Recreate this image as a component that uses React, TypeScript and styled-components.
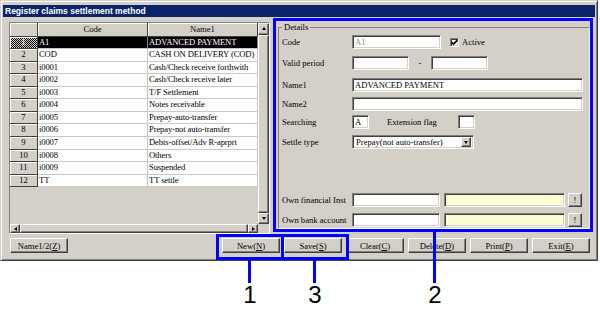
import styled, { createGlobalStyle } from "styled-components";

const GlobalStyle = createGlobalStyle`
  * { box-sizing: border-box; }
  body {
    margin: 0;
    background: #fff;
  }
`;

const serif = `"Liberation Serif", "Times New Roman", serif`;
const face = "#d4d0c8";

const raised = `
  background: ${face};
  border: 1px solid;
  border-color: #fff #404040 #404040 #fff;
  box-shadow: inset -1px -1px #808080;
`;

const sunken = `
  border: 1px solid;
  border-color: #808080 #fff #fff #808080;
  box-shadow: inset 1px 1px #404040, inset -1px -1px ${face};
`;

const Page = styled.div`
  position: relative;
  width: 600px;
  height: 312px;
  overflow: hidden;
  font-family: ${serif};
  font-size: 8.6px;
  color: #000;
`;

const Window = styled.div`
  width: 598px;
  height: 261px;
  padding: 4px 2px 0 2px;
  background: ${face};
  border: 1px solid;
  border-color: ${face} #404040 #404040 ${face};
  box-shadow: inset 1px 1px #fff, inset -1px -1px #808080;
`;

const TitleBar = styled.div`
  height: 12px;
  padding-left: 2px;
  background: #0a246a;
  color: #fff;
  font-family: "Liberation Sans", Arial, sans-serif;
  font-weight: 700;
  font-size: 8.5px;
  line-height: 12px;
  white-space: nowrap;
`;

const Main = styled.div`
  display: flex;
  align-items: flex-start;
  padding: 5px 0 0 6px;
`;

const GridFrame = styled.div`
  width: 261px;
  height: 212px;
  border: 1px solid;
  border-color: #808080 #fff #fff #808080;
  display: grid;
  grid-template-columns: 1fr 11px;
  grid-template-rows: 1fr 9px;
`;

const TableArea = styled.div`
  background: ${face};
  overflow: hidden;
`;

const Table = styled.div`
  display: grid;
  grid-template-columns: 28px 110px 110px;
  grid-template-rows: 13.6px;
  grid-auto-rows: 12.55px;
`;

const HeadCell = styled.div`
  background: ${face};
  border-right: 1px solid #404040;
  border-bottom: 1px solid #404040;
  box-shadow: inset 1px 1px #fff;
  text-align: center;
  line-height: 12.6px;
  white-space: nowrap;
  overflow: hidden;
`;

const RowHead = styled(HeadCell)<{ $active?: boolean }>`
  line-height: 11.55px;
  ${(p) =>
    p.$active &&
    `
    background: repeating-conic-gradient(#000 0 25%, ${face} 0 50%) 0 0 / 2px 2px;
    color: #fff;
  `}
`;

const DataCell = styled.div<{ $selected?: boolean }>`
  background: ${(p) => (p.$selected ? "#000" : "#fff")};
  color: ${(p) => (p.$selected ? "#fff" : "#000")};
  border-right: 1px solid ${(p) => (p.$selected ? "#808080" : "#c8c8c8")};
  border-bottom: 1px solid #c8c8c8;
  padding-left: 1px;
  line-height: 11.55px;
  letter-spacing: -0.12px;
  white-space: nowrap;
  overflow: hidden;
`;

const VScroll = styled.div`
  display: flex;
  flex-direction: column;
  background: #ebe9e4;
`;

const HScroll = styled.div`
  display: flex;
  background: #ebe9e4;
`;

const ScrollBtn = styled.div<{ $w: number; $h: number }>`
  ${raised}
  width: ${(p) => p.$w}px;
  height: ${(p) => p.$h}px;
  flex-shrink: 0;
  display: flex;
  align-items: center;
  justify-content: center;
`;

const Thumb = styled.div`
  ${raised}
  flex: 1;
`;

const Corner = styled.div`
  background: ${face};
`;

type Dir = "up" | "down" | "left" | "right";

const Arrow = styled.span<{ $dir: Dir }>`
  width: 0;
  height: 0;
  border: 2.5px solid transparent;
  ${(p) =>
    p.$dir === "up"
      ? "border-bottom: 3px solid #000; border-top-width: 0; margin-top: -1px;"
      : p.$dir === "down"
      ? "border-top: 3px solid #000; border-bottom-width: 0;"
      : p.$dir === "left"
      ? "border-right: 3px solid #000; border-left-width: 0;"
      : "border-left: 3px solid #000; border-right-width: 0;"}
`;

const GroupBox = styled.fieldset`
  margin: 0 0 0 8px;
  padding: 0 5px 0 3px;
  width: 312px;
  height: 207px;
  min-width: 0;
  border: 1px solid #808080;
  border-right-color: #fff;
  border-bottom-color: #fff;
  box-shadow: 1px 0 #808080, 0 1px #808080;
`;

const Legend = styled.legend`
  padding: 0 2px;
  line-height: 10px;
  font-size: 8.6px;
`;

const FieldRow = styled.div<{ $mt: number }>`
  display: flex;
  align-items: center;
  height: 14px;
  margin-top: ${(p) => p.$mt}px;
`;

const Label = styled.span<{ $w: number; $ml?: number }>`
  width: ${(p) => p.$w}px;
  margin-left: ${(p) => p.$ml ?? 0}px;
  flex-shrink: 0;
  white-space: nowrap;
`;

const TextBox = styled.input<{ $w: number; $bg?: string; $muted?: boolean; $ml?: number }>`
  ${sunken}
  width: ${(p) => p.$w}px;
  height: 14px;
  flex-shrink: 0;
  padding: 0 2px;
  margin: 0 0 0 ${(p) => p.$ml ?? 0}px;
  background: ${(p) => p.$bg ?? "#fff"};
  color: ${(p) => (p.$muted ? "#8a8a8a" : "#000")};
  font-family: ${serif};
  font-size: 8.6px;
  outline: none;
`;

const Dash = styled.span`
  width: 22px;
  text-align: center;
`;

const CheckBox = styled.span`
  ${sunken}
  width: 9px;
  height: 9px;
  margin: 0 3px 0 9px;
  background: #fff;
  display: flex;
  align-items: center;
  justify-content: center;
`;

const Select = styled.div`
  ${sunken}
  width: 122px;
  height: 14px;
  background: #fff;
  display: flex;
  align-items: center;
  padding: 2px 2px 2px 3px;
`;

const SelectText = styled.span`
  flex: 1;
  white-space: nowrap;
`;

const SelectBtn = styled.span`
  ${raised}
  width: 10px;
  height: 10px;
  display: flex;
  align-items: center;
  justify-content: center;
`;

const LookupBtn = styled.span`
  ${raised}
  width: 14px;
  height: 14px;
  margin-left: 3px;
  display: flex;
  align-items: center;
  justify-content: center;
  font-size: 8.6px;
`;

const Footer = styled.div`
  display: flex;
  align-items: center;
  margin-top: 4px;
  padding: 0 5px 0 7px;
`;

const ButtonGroup = styled.div`
  display: flex;
  gap: 4px;
  margin-left: auto;
`;

const Button = styled.button`
  ${raised}
  width: 58px;
  height: 15px;
  padding: 0;
  font-family: ${serif};
  font-size: 8.6px;
  color: #000;
  line-height: 12px;
`;

const CalloutBox = styled.div<{ $x: number; $y: number; $w: number; $h: number }>`
  position: absolute;
  left: ${(p) => p.$x}px;
  top: ${(p) => p.$y}px;
  width: ${(p) => p.$w}px;
  height: ${(p) => p.$h}px;
  border: 3px solid #0000ff;
`;

const Leader = styled.div<{ $x: number; $y: number; $h: number }>`
  position: absolute;
  left: ${(p) => p.$x}px;
  top: ${(p) => p.$y}px;
  width: 3px;
  height: ${(p) => p.$h}px;
  background: #0000ff;
`;

const CalloutNum = styled.div<{ $x: number }>`
  position: absolute;
  top: 283px;
  left: ${(p) => p.$x - 10}px;
  width: 20px;
  text-align: center;
  font-family: "Liberation Sans", Arial, sans-serif;
  font-size: 24px;
  line-height: 24px;
`;

const rows = [
  ["A1", "ADVANCED PAYMENT"],
  ["COD", "CASH ON DELIVERY (COD)"],
  ["i0001", "Cash/Check receive forthwith"],
  ["i0002", "Cash/Check receive later"],
  ["i0003", "T/F Settlement"],
  ["i0004", "Notes receivable"],
  ["i0005", "Prepay-auto-transfer"],
  ["i0006", "Prepay-not auto-transfer"],
  ["i0007", "Debts-offset/Adv R-aprprt"],
  ["i0008", "Others"],
  ["i0009", "Suspended"],
  ["TT", "TT settle"],
];

const App = () => {
  return (
    <Page>
      <GlobalStyle />
      <Window>
        <TitleBar>Register claims settlement method</TitleBar>
        <Main>
          <GridFrame>
            <TableArea>
              <Table>
                <HeadCell />
                <HeadCell>Code</HeadCell>
                <HeadCell>Name1</HeadCell>
                {rows.flatMap(([code, name], i) => [
                  <RowHead key={`h${i}`} $active={i === 0}>{i + 1}</RowHead>,
                  <DataCell key={`c${i}`} $selected={i === 0}>{code}</DataCell>,
                  <DataCell key={`n${i}`} $selected={i === 0}>{name}</DataCell>,
                ])}
              </Table>
            </TableArea>
            <VScroll>
              <ScrollBtn $w={11} $h={12}><Arrow $dir="up" /></ScrollBtn>
              <Thumb />
              <ScrollBtn $w={11} $h={11}><Arrow $dir="down" /></ScrollBtn>
            </VScroll>
            <HScroll>
              <ScrollBtn $w={10} $h={9}><Arrow $dir="left" /></ScrollBtn>
              <Thumb />
              <ScrollBtn $w={10} $h={9}><Arrow $dir="right" /></ScrollBtn>
            </HScroll>
            <Corner />
          </GridFrame>

          <GroupBox>
            <Legend>Details</Legend>
            <FieldRow $mt={3}>
              <Label $w={70}>Code</Label>
              <TextBox $w={89} $muted readOnly value="A1" />
              <CheckBox>
                <svg width="7" height="7" viewBox="0 0 7 7">
                  <path d="M0.5 3 L2.5 5 L6.5 1" fill="none" stroke="#000" strokeWidth="1.6" />
                </svg>
              </CheckBox>
              <span>Active</span>
            </FieldRow>
            <FieldRow $mt={7}>
              <Label $w={70}>Valid period</Label>
              <TextBox $w={57} readOnly value="" />
              <Dash>-</Dash>
              <TextBox $w={57} readOnly value="" />
            </FieldRow>
            <FieldRow $mt={8}>
              <Label $w={70}>Name1</Label>
              <TextBox $w={231} readOnly value="ADVANCED PAYMENT" />
            </FieldRow>
            <FieldRow $mt={5}>
              <Label $w={70}>Name2</Label>
              <TextBox $w={231} readOnly value="" />
            </FieldRow>
            <FieldRow $mt={4}>
              <Label $w={70}>Searching</Label>
              <TextBox $w={17} readOnly value="A" />
              <Label $w={71} $ml={18}>Extension flag</Label>
              <TextBox $w={17} readOnly value="" />
            </FieldRow>
            <FieldRow $mt={6}>
              <Label $w={70}>Settle type</Label>
              <Select>
                <SelectText>Prepay(not auto-transfer)</SelectText>
                <SelectBtn><Arrow $dir="down" /></SelectBtn>
              </Select>
            </FieldRow>
            <FieldRow $mt={44}>
              <Label $w={70}>Own financial Inst</Label>
              <TextBox $w={88} readOnly value="" />
              <TextBox $w={121} $bg="#fcfbd2" $ml={4} readOnly value="" />
              <LookupBtn>!</LookupBtn>
            </FieldRow>
            <FieldRow $mt={6}>
              <Label $w={70}>Own bank account</Label>
              <TextBox $w={88} readOnly value="" />
              <TextBox $w={121} $bg="#fcfbd2" $ml={4} readOnly value="" />
              <LookupBtn>!</LookupBtn>
            </FieldRow>
          </GroupBox>
        </Main>

        <Footer>
          <Button>Name1/2(<u>Z</u>)</Button>
          <ButtonGroup>
            <Button>New(<u>N</u>)</Button>
            <Button>Save(<u>S</u>)</Button>
            <Button>Clear(<u>C</u>)</Button>
            <Button>Delete(<u>D</u>)</Button>
            <Button>Print(<u>P</u>)</Button>
            <Button>Exit(<u>E</u>)</Button>
          </ButtonGroup>
        </Footer>
      </Window>

      <CalloutBox $x={273} $y={18} $w={320} $h={214} />
      <CalloutBox $x={216} $y={234} $w={133} $h={26} />
      <Leader $x={281} $y={234} $h={26} />
      <Leader $x={248} $y={260} $h={23} />
      <Leader $x={313} $y={260} $h={23} />
      <Leader $x={433} $y={232} $h={51} />
      <CalloutNum $x={250}>1</CalloutNum>
      <CalloutNum $x={315}>3</CalloutNum>
      <CalloutNum $x={435}>2</CalloutNum>
    </Page>
  );
};

export default App;
